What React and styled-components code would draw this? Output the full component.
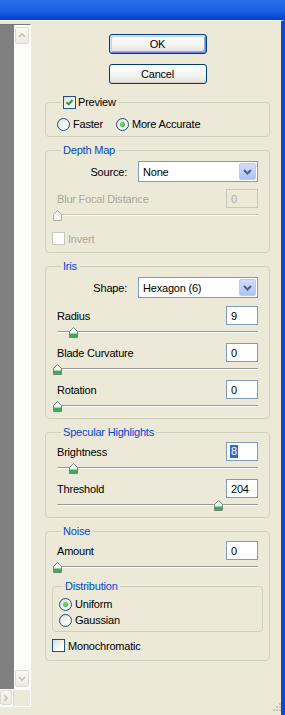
import styled, { createGlobalStyle } from "styled-components";

const GlobalStyle = createGlobalStyle`
	html, body {
		margin: 0;
		padding: 0;
	}
	body {
		background: #ece9d8;
		font-family: "Liberation Sans", Arial, sans-serif;
		font-size: 11px;
		letter-spacing: -0.2px;
		color: #000;
		overflow: hidden;
	}
`;

const Frame = styled.div`
	width: 285px;
	height: 715px;
	display: flex;
	flex-direction: column;
	background: #ece9d8;
`;

const TitleBar = styled.div`
	height: 20px;
	flex: none;
	background: linear-gradient(to bottom, #2b6fea 0%, #1660e4 55%, #0a4bd6 85%, #0840c4 100%);
`;

const Body = styled.div`
	flex: 1;
	min-height: 0;
	display: flex;
	border-top: 1px solid #f6f5ef;
	border-right: 4px solid #0a47d6;
`;

/* ---- left preview pane ---- */

const PreviewPane = styled.div`
	width: 30px;
	flex: none;
	margin: 3px 0 8px;
	display: flex;
	flex-direction: column;
	border-top: 1px solid #7a7a74;
	border-right: 1px solid #fdfdfb;
	border-bottom: 1px solid #fdfdfb;
`;

const ViewRow = styled.div`
	flex: 1;
	display: flex;
`;

const Canvas = styled.div`
	width: 14px;
	background: #808080;
`;

const VScroll = styled.div`
	flex: 1;
	background: #fcfcfa;
	display: flex;
	flex-direction: column;
	justify-content: space-between;
	padding: 2px 1px 2px;
`;

const ScrollBtn = styled.div`
	width: ${(p) => (p.$wide ? 12 : 14)}px;
	height: ${(p) => (p.$wide ? 15 : 17)}px;
	box-sizing: border-box;
	border: 1px solid #dcdad0;
	border-radius: 2px;
	background: linear-gradient(to bottom, #f8f8f4, #eceae2);
	display: flex;
	align-items: center;
	justify-content: center;
`;

const HScrollRow = styled.div`
	height: 17px;
	display: flex;
	align-items: center;
	gap: 1px;
	background: #fcfcfa;
`;

const Corner = styled.div`
	flex: 1;
	height: 16px;
	background: #ece9d8;
	border-left: 1px solid #dcdad0;
`;

/* ---- right option panel ---- */

const Panel = styled.div`
	flex: 1;
	display: flex;
	flex-direction: column;
	padding: 13px 11px 0 14px;
`;

const ButtonStack = styled.div`
	display: flex;
	flex-direction: column;
	align-items: center;
	gap: 10px;
	margin-bottom: 12px;
`;

const Button = styled.button`
	width: 98px;
	height: 20px;
	box-sizing: border-box;
	padding: 0;
	border: 1px solid #003c74;
	border-radius: 3px;
	background: linear-gradient(to bottom, #ffffff 0%, #f4f4f0 55%, #e3e0d6 100%);
	font: inherit;
	letter-spacing: inherit;
	color: #000;
	box-shadow: ${(p) =>
		p.$default
			? "inset 1px 1px 0 #cee7ff, inset -1px -1px 0 #6982ee, inset 2px 2px 0 #bcd4f6, inset -2px -2px 0 #89ade4"
			: "inset 0 -1px 0 #d6d0c5"};
`;

const Group = styled.fieldset`
	margin: ${(p) => p.$mt ?? 7}px ${(p) => (p.$inset ? -5 : 0)}px 0;
	padding: ${(p) => p.$pt}px ${(p) => (p.$inset ? 6 : 11)}px ${(p) => p.$pb}px;
	border: 1px solid #d0d0bf;
	border-radius: 4px;
	min-width: 0;
	display: flex;
	flex-direction: column;
`;

const Legend = styled.legend`
	margin-left: 4px;
	padding: 0 2px;
	height: 13px;
	line-height: 13px;
	color: #0046d5;
	display: flex;
	align-items: center;
	gap: 2px;
`;

const PlainLabel = styled.span`
	color: #000;
`;

const RadioRow = styled.div`
	display: flex;
	flex-direction: ${(p) => (p.$column ? "column" : "row")};
	gap: ${(p) => (p.$column ? 0 : 13)}px;
`;

const Option = styled.label`
	display: flex;
	align-items: center;
	gap: 3px;
	height: ${(p) => (p.$tall ? 16 : 14)}px;
	color: ${(p) => (p.$disabled ? "#aca899" : "#000")};
	margin-left: ${(p) => (p.$outdent ? -5 : 0)}px;
`;

const Radio = styled.span`
	width: 13px;
	height: 13px;
	box-sizing: border-box;
	border-radius: 50%;
	border: 1px solid #1c5180;
	background: linear-gradient(135deg, #dcdcd7 0%, #fbfbf9 70%, #ffffff 100%);
	display: flex;
	align-items: center;
	justify-content: center;

	&::after {
		content: "";
		display: ${(p) => (p.$on ? "block" : "none")};
		width: 5px;
		height: 5px;
		border-radius: 50%;
		background: radial-gradient(circle at 40% 40%, #7ce07a, #21a121);
	}
`;

const Check = styled.span`
	width: 13px;
	height: 13px;
	box-sizing: border-box;
	border: 1px solid ${(p) => (p.$disabled ? "#cac8bb" : "#1c5180")};
	background: ${(p) =>
		p.$disabled ? "#ffffff" : "linear-gradient(135deg, #dcdcd7 0%, #fbfbf9 70%, #ffffff 100%)"};
	display: flex;
	align-items: center;
	justify-content: center;
`;

const FieldRow = styled.div`
	display: flex;
	align-items: center;
	justify-content: ${(p) => (p.$end ? "flex-end" : "space-between")};
	gap: 11px;
	margin-top: ${(p) => p.$mt ?? 0}px;
	color: ${(p) => (p.$disabled ? "#aca899" : "#000")};
`;

const Select = styled.div`
	width: 120px;
	height: 21px;
	box-sizing: border-box;
	border: 1px solid #7f9db9;
	background: #fff;
	display: flex;
	align-items: stretch;
	padding: 1px;
`;

const SelectText = styled.span`
	flex: 1;
	display: flex;
	align-items: center;
	padding-left: 3px;
`;

const SelectBtn = styled.span`
	width: 17px;
	border-radius: 2px;
	background: linear-gradient(to bottom, #d2defb 0%, #bccdf6 60%, #aec3f3 100%);
	border: 1px solid #b9cbf3;
	box-sizing: border-box;
	display: flex;
	align-items: center;
	justify-content: center;
`;

const NumBox = styled.div`
	width: 32px;
	height: 19px;
	box-sizing: border-box;
	border: 1px solid ${(p) => (p.$disabled ? "#c9c7ba" : "#7f9db9")};
	background: ${(p) => (p.$disabled ? "#ece9d8" : "#fff")};
	color: ${(p) => (p.$disabled ? "#aca899" : "#000")};
	display: flex;
	align-items: center;
	padding-left: 4px;
`;

const Selected = styled.span`
	background: #316ac5;
	color: #fff;
	line-height: 13px;
	padding: 0 1px;
	margin-left: -1px;
`;

const ParamList = styled.div`
	display: flex;
	flex-direction: column;
	gap: 4px;
	margin-top: ${(p) => p.$mt ?? 0}px;
`;

const Track = styled.div`
	position: relative;
	height: 14px;

	&::before {
		content: "";
		position: absolute;
		left: 0;
		right: 0;
		top: 6px;
		height: 2px;
		box-sizing: border-box;
		border-top: 1px solid ${(p) => (p.$disabled ? "#c5c3b6" : "#9d9c94")};
		border-bottom: 1px solid #ffffff;
		border-radius: 2px 0 0 2px;
	}
`;

const Thumb = styled.svg`
	position: absolute;
	top: 2px;
	margin-left: -4px;
`;

const Grip = styled.svg`
	align-self: flex-end;
	margin: auto -11px 2px 0;
`;

const Chevron = ({ dir, color = "#c4c2b8" }) => {
	const d = {
		up: "M1 5 L4 2 L7 5",
		down: "M1 2 L4 5 L7 2",
		right: "M2 1 L5 4 L2 7",
	}[dir];
	return (
		<svg width="8" height="8" viewBox="0 0 8 8">
			<path d={d} fill="none" stroke={color} strokeWidth="1.6" />
		</svg>
	);
};

const Tick = () => (
	<svg width="9" height="9" viewBox="0 0 9 9">
		<path d="M1.5 4.2 L3.6 6.4 L7.6 2" fill="none" stroke="#21a121" strokeWidth="2" />
	</svg>
);

const Slider = ({ pct = 0, disabled }) => (
	<Track $disabled={disabled}>
		<Thumb width="9" height="11" viewBox="0 0 9 11" style={{ left: `${pct}%` }}>
			<path
				d="M0.5 4.5 L4.5 0.5 L8.5 4.5 V10.5 H0.5 Z"
				fill={disabled ? "#f4f3ee" : "#fafaf6"}
				stroke={disabled ? "#b3b1a5" : "#6a8c74"}
			/>
			{!disabled && <rect x="1" y="6.5" width="7" height="3.5" fill="#3faa5c" />}
		</Thumb>
	</Track>
);

const Param = ({ label, value, pct, selected }) => (
	<div>
		<FieldRow>
			<span>{label}</span>
			<NumBox>{selected ? <Selected>{value}</Selected> : value}</NumBox>
		</FieldRow>
		<Slider pct={pct} />
	</div>
);

const Dropdown = ({ label, value, mt }) => (
	<FieldRow $end $mt={mt}>
		<span>{label}</span>
		<Select>
			<SelectText>{value}</SelectText>
			<SelectBtn>
				<svg width="9" height="6" viewBox="0 0 9 6">
					<path d="M1 1 L4.5 4.5 L8 1" fill="none" stroke="#4d6185" strokeWidth="2" />
				</svg>
			</SelectBtn>
		</Select>
	</FieldRow>
);

export default function App() {
	return (
		<>
			<GlobalStyle />
			<Frame>
				<TitleBar />
				<Body>
					<PreviewPane>
						<ViewRow>
							<Canvas />
							<VScroll>
								<ScrollBtn>
									<Chevron dir="up" />
								</ScrollBtn>
								<ScrollBtn>
									<Chevron dir="down" />
								</ScrollBtn>
							</VScroll>
						</ViewRow>
						<HScrollRow>
							<ScrollBtn $wide>
								<Chevron dir="right" />
							</ScrollBtn>
							<Corner />
						</HScrollRow>
					</PreviewPane>

					<Panel>
						<ButtonStack>
							<Button $default>OK</Button>
							<Button>Cancel</Button>
						</ButtonStack>

						<Group $mt={0} $pt={8} $pb={5}>
							<Legend>
								<Check>
									<Tick />
								</Check>
								<PlainLabel>Preview</PlainLabel>
							</Legend>
							<RadioRow>
								<Option>
									<Radio />
									Faster
								</Option>
								<Option>
									<Radio $on />
									More Accurate
								</Option>
							</RadioRow>
						</Group>

						<Group $pt={4} $pb={7}>
							<Legend>Depth Map</Legend>
							<Dropdown label="Source:" value="None" />
							<FieldRow $mt={7} $disabled>
								<span>Blur Focal Distance</span>
								<NumBox $disabled>0</NumBox>
							</FieldRow>
							<Slider disabled />
							<Option $disabled $outdent style={{ marginTop: 10, height: 13 }}>
								<Check $disabled />
								Invert
							</Option>
						</Group>

						<Group $pt={4} $pb={5}>
							<Legend>Iris</Legend>
							<Dropdown label="Shape:" value="Hexagon (6)" />
							<ParamList $mt={8}>
								<Param label="Radius" value="9" pct={8} />
								<Param label="Blade Curvature" value="0" pct={0} />
								<Param label="Rotation" value="0" pct={0} />
							</ParamList>
						</Group>

						<Group $pt={3} $pb={5}>
							<Legend>Specular Highlights</Legend>
							<ParamList>
								<Param label="Brightness" value="8" pct={8} selected />
								<Param label="Threshold" value="204" pct={80} />
							</ParamList>
						</Group>

						<Group $pt={3} $pb={8}>
							<Legend>Noise</Legend>
							<Param label="Amount" value="0" pct={0} />
							<Group $inset $mt={6} $pt={3} $pb={3}>
								<Legend>Distribution</Legend>
								<RadioRow $column>
									<Option $tall>
										<Radio $on />
										Uniform
									</Option>
									<Option $tall>
										<Radio />
										Gaussian
									</Option>
								</RadioRow>
							</Group>
							<Option $outdent style={{ marginTop: 7, height: 13 }}>
								<Check />
								Monochromatic
							</Option>
						</Group>

						<Grip width="8" height="11" viewBox="0 0 8 11">
							{[
								[6, 1],
								[6, 4],
								[3, 4],
								[6, 7],
								[3, 7],
								[0, 7],
							].map(([x, y]) => (
								<rect key={`${x}-${y}`} x={x} y={y} width="2" height="2" fill="#c8c5b6" />
							))}
						</Grip>
					</Panel>
				</Body>
			</Frame>
		</>
	);
}
